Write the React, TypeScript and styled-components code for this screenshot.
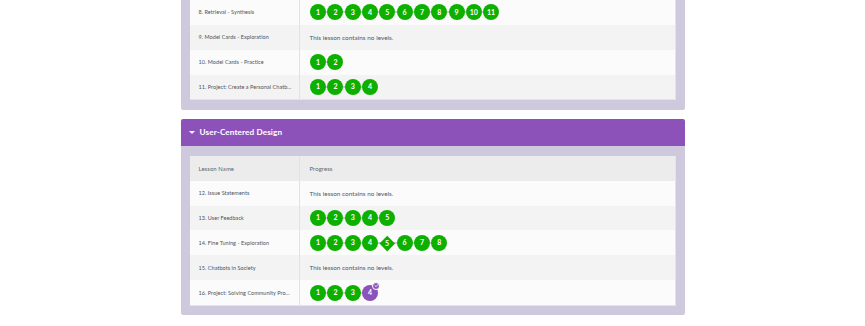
import React from "react";
import styled, { createGlobalStyle } from "styled-components";

const GlobalStyle = createGlobalStyle`
  html, body { margin: 0; padding: 0; background: #ffffff; }
  body { font-family: "Lato", "Noto Sans", sans-serif; }
`;

const GREEN = "#0eb000";
const PURPLE = "#8c52ba";

type Level = { n: number; kind?: "circle" | "diamond" | "assessed" };
type Lesson = { name: string; levels: Level[] | null };

const mk = (count: number, special: Record<number, Level["kind"]> = {}): Level[] =>
  Array.from({ length: count }, (_, i) => ({ n: i + 1, kind: special[i + 1] || "circle" }));

const topLessons: Lesson[] = [
  { name: "8. Retrieval - Synthesis", levels: mk(11) },
  { name: "9. Model Cards - Exploration", levels: null },
  { name: "10. Model Cards - Practice", levels: mk(2) },
  { name: "11. Project: Create a Personal Chatb...", levels: mk(4) },
];

const ucdLessons: Lesson[] = [
  { name: "12. Issue Statements", levels: null },
  { name: "13. User Feedback", levels: mk(5) },
  { name: "14. Fine Tuning - Exploration", levels: mk(8, { 5: "diamond" }) },
  { name: "15. Chatbots in Society", levels: null },
  { name: "16. Project: Solving Community Pro...", levels: mk(4, { 4: "assessed" }) },
];

const Page = styled.div`
  width: 504px;
  margin: 0 auto;
  display: flex;
  flex-direction: column;
  gap: 9px;
`;

const Section = styled.section`
  display: flex;
  flex-direction: column;
`;

const SectionHeader = styled.div`
  height: 27px;
  background: ${PURPLE};
  border-radius: 2px 2px 0 0;
  display: flex;
  align-items: center;
  gap: 5px;
  padding-left: 8px;
  color: #ffffff;
  font-weight: 700;
  font-size: 8.2px;
  letter-spacing: 0.1px;
`;

const Caret = styled.span`
  width: 0;
  height: 0;
  border-left: 3px solid transparent;
  border-right: 3px solid transparent;
  border-top: 3.5px solid #ffffff;
  margin-top: 1px;
`;

const Panel = styled.div<{ $cutTop?: boolean }>`
  background: #cfc9de;
  padding: ${(p) => (p.$cutTop ? "0 9px 9.5px" : "10px 9px 9px")};
  border-radius: 0 0 2px 2px;
`;

const Table = styled.div`
  display: grid;
  grid-template-columns: 110px 1fr;
  background: #fbfbfb;
  border-right: 1px solid #e4e4e4;
  border-bottom: 1px solid #e4e4e4;
`;

const Cell = styled.div<{ $shade: "head" | "odd" | "even"; $first?: boolean }>`
  height: 24.85px;
  box-sizing: border-box;
  display: flex;
  align-items: center;
  padding-left: ${(p) => (p.$first ? "9px" : "10px")};
  background: ${(p) => (p.$shade === "head" ? "#ececec" : p.$shade === "even" ? "#f3f3f3" : "#fbfbfb")};
  border-right: ${(p) => (p.$first ? "1px solid #e2e2e2" : "none")};
  overflow: hidden;
  white-space: nowrap;
  min-width: 0;
`;

const HeadText = styled.span`
  font-size: 5.9px;
  color: #5b6770;
  letter-spacing: 0.1px;
`;

const LessonName = styled.span`
  font-size: 5.5px;
  font-weight: 400;
  color: #4a545c;
  letter-spacing: 0.05px;
`;

const NoLevels = styled.span`
  font-size: 6.3px;
  color: #4d575f;
  letter-spacing: 0.05px;
`;

const Bubbles = styled.div`
  display: flex;
  align-items: center;
`;

const Slot = styled.div<{ $last?: boolean }>`
  position: relative;
  display: flex;
  align-items: center;
  justify-content: center;
  width: 17.3px;
  height: 18px;
  &::before {
    content: "";
    display: ${(p) => (p.$last ? "none" : "block")};
    position: absolute;
    left: 8px;
    right: -8px;
    top: 50%;
    height: 2px;
    margin-top: -1px;
    background: #c6cacd;
  }
`;

const Bubble = styled.div<{ $color: string }>`
  position: relative;
  z-index: 1;
  width: 16px;
  height: 16px;
  border-radius: 50%;
  background: ${(p) => p.$color};
  color: #ffffff;
  font-size: 7px;
  font-weight: 700;
  display: flex;
  align-items: center;
  justify-content: center;
  line-height: 1;
`;

const Diamond = styled.div`
  position: relative;
  z-index: 1;
  width: 10.5px;
  height: 10.5px;
  background: ${GREEN};
  transform: rotate(45deg);
  display: flex;
  align-items: center;
  justify-content: center;
`;

const DiamondLabel = styled.span`
  transform: rotate(-45deg);
  color: #ffffff;
  font-size: 7px;
  font-weight: 700;
  line-height: 1;
`;

const Badge = styled.span`
  position: absolute;
  top: -3px;
  right: -2px;
  width: 8px;
  height: 8px;
  border-radius: 50%;
  background: ${PURPLE};
  border: 0.8px solid #ffffff;
  box-sizing: border-box;
  display: flex;
  align-items: center;
  justify-content: center;
`;

const CheckIcon = () => (
  <svg width="5" height="5" viewBox="0 0 10 10">
    <path d="M2 5.2 L4.2 7.3 L8.2 2.8" fill="none" stroke="#ffffff" strokeWidth="1.8" strokeLinecap="round" strokeLinejoin="round" />
  </svg>
);

const LevelBubble: React.FC<{ level: Level; last: boolean }> = ({ level, last }) => (
  <Slot $last={last}>
    {level.kind === "diamond" ? (
      <Diamond>
        <DiamondLabel>{level.n}</DiamondLabel>
      </Diamond>
    ) : level.kind === "assessed" ? (
      <Bubble $color={PURPLE}>
        {level.n}
        <Badge>
          <CheckIcon />
        </Badge>
      </Bubble>
    ) : (
      <Bubble $color={GREEN}>{level.n}</Bubble>
    )}
  </Slot>
);

const LessonRows: React.FC<{ lessons: Lesson[]; startEven: boolean }> = ({ lessons, startEven }) => (
  <>
    {lessons.map((l, i) => {
      const shade = (i % 2 === 0) === startEven ? "even" : "odd";
      return (
        <React.Fragment key={l.name}>
          <Cell $shade={shade} $first>
            <LessonName>{l.name}</LessonName>
          </Cell>
          <Cell $shade={shade}>
            {l.levels ? (
              <Bubbles>
                {l.levels.map((lv, j) => (
                  <LevelBubble key={lv.n} level={lv} last={j === l.levels!.length - 1} />
                ))}
              </Bubbles>
            ) : (
              <NoLevels>This lesson contains no levels.</NoLevels>
            )}
          </Cell>
        </React.Fragment>
      );
    })}
  </>
);

export default function App() {
  return (
    <>
      <GlobalStyle />
      <Page>
        <Section>
          <Panel $cutTop>
            <Table>
              <LessonRows lessons={topLessons} startEven={false} />
            </Table>
          </Panel>
        </Section>
        <Section>
          <SectionHeader>
            <Caret />
            User-Centered Design
          </SectionHeader>
          <Panel>
            <Table>
              <Cell $shade="head" $first>
                <HeadText>Lesson Name</HeadText>
              </Cell>
              <Cell $shade="head">
                <HeadText>Progress</HeadText>
              </Cell>
              <LessonRows lessons={ucdLessons} startEven={false} />
            </Table>
          </Panel>
        </Section>
      </Page>
    </>
  );
}
